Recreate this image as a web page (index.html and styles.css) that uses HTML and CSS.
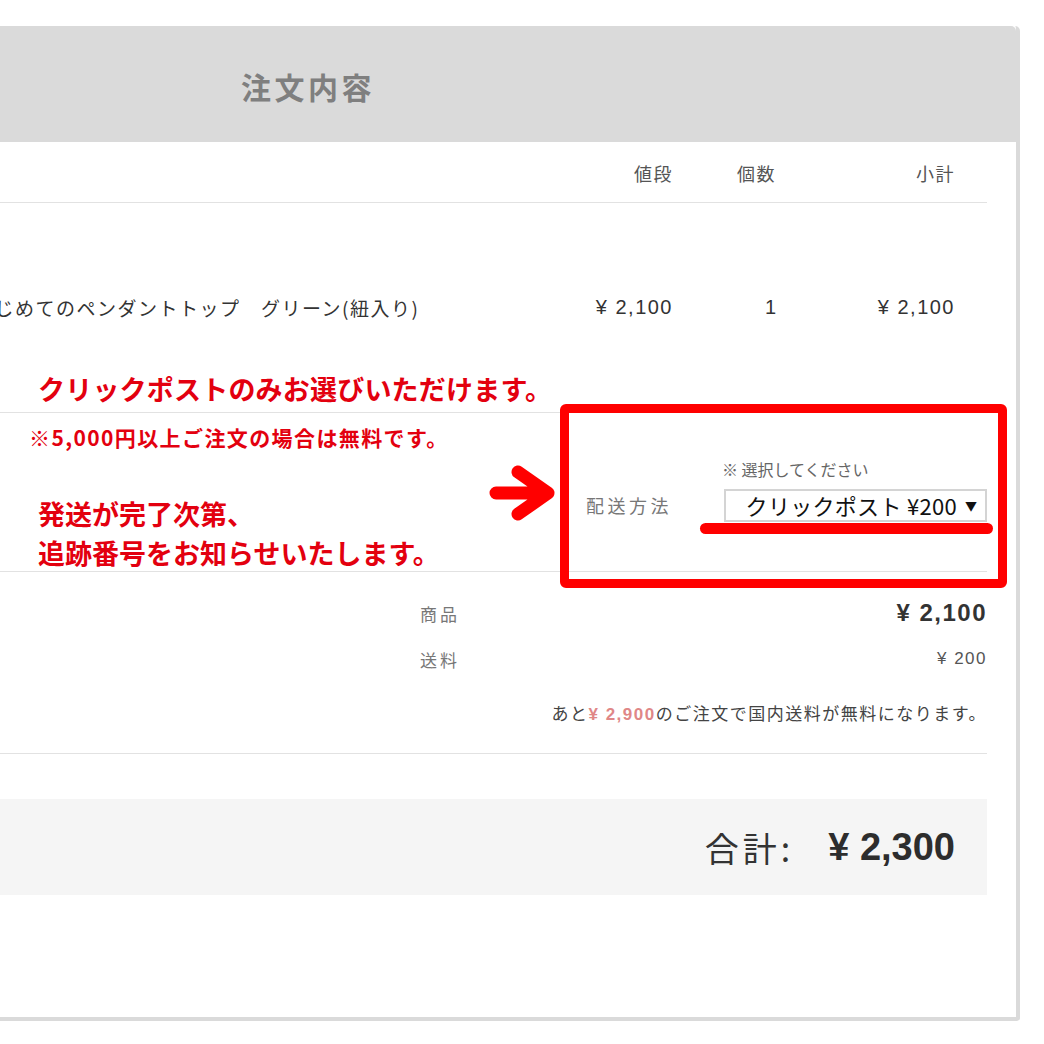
FILE: index.html
```html
<!DOCTYPE html>
<html lang="ja">
<head>
<meta charset="utf-8">
<title>注文内容</title>
<link rel="stylesheet" href="styles.css">
</head>
<body>
<div class="page">
  <section class="card">
    <header class="card-head"><h2 class="card-title">注文内容</h2></header>
    <div class="card-body">
      <div class="row row-head">
        <div class="c-name"></div>
        <div class="c-price">値段</div>
        <div class="c-qty">個数</div>
        <div class="c-sub">小計</div>
      </div>
      <div class="row row-item">
        <div class="c-name">はじめてのペンダントトップ　グリーン(紐入り)</div>
        <div class="c-price">¥ 2,100</div>
        <div class="c-qty">1</div>
        <div class="c-sub">¥ 2,100</div>
      </div>
      <div class="ship">
        <div class="ship-label">配送方法</div>
        <div class="ship-field">
          <div class="ship-note">※ 選択してください</div>
          <div class="select"><span class="select-text">クリックポスト ¥200</span><span class="caret">▼</span></div>
        </div>
      </div>
      <div class="summary">
        <div class="sum-row"><span class="sum-label">商品</span><span class="sum-val strong">¥ 2,100</span></div>
        <div class="sum-row"><span class="sum-label">送料</span><span class="sum-val">¥ 200</span></div>
        <p class="sum-note">あと<b class="pink">¥ 2,900</b>のご注文で国内送料が無料になります。</p>
      </div>
      <div class="total"><span class="total-label">合計:</span><span class="total-val">¥ 2,300</span></div>
    </div>
  </section>

  <div class="annot annot-main">クリックポストのみお選びいただけます。</div>
  <div class="annot annot-free">※5,000円以上ご注文の場合は無料です。</div>
  <div class="annot annot-track">発送が完了次第、<br>追跡番号をお知らせいたします。</div>
  <svg class="annot-arrow" width="76" height="64" viewBox="0 0 76 64">
    <path d="M12 31 L64 31 M34 10 L64 31 L34 52" fill="none" stroke="#f00" stroke-width="13" stroke-linecap="round" stroke-linejoin="round"/>
  </svg>
  <div class="annot-box"></div>
  <div class="annot-line"></div>
</div>
</body>
</html>
```

FILE: styles.css
```css
html, body {
  margin: 0;
  padding: 0;
  overflow: hidden;
  background: #fff;
}
body {
  font-family: "Liberation Sans", "Noto Sans CJK JP", sans-serif;
  color: #333;
}
.page {
  position: relative;
  width: 1044px;
  height: 1044px;
  overflow: hidden;
}
.card {
  box-sizing: border-box;
  margin-top: 26px;
  margin-left: -404px;
  width: 1424px;
  height: 995px;
  border-right: 4px solid #dadada;
  border-bottom: 4px solid #dadada;
  border-top-right-radius: 5px;
  border-bottom-right-radius: 4px;
  background: #fff;
}
.card-head {
  box-sizing: border-box;
  height: 116px;
  background: #dadada;
  border-top-right-radius: 5px;
  padding-top: 42px;
}
.card-title {
  margin: 0;
  padding-left: 4px;
  text-align: center;
  font-family: "Noto Sans CJK JP", sans-serif;
  font-size: 30px;
  line-height: 36px;
  font-weight: 700;
  letter-spacing: 3.5px;
  color: #7f7f7f;
}
.card-body {
  padding: 0 29px 0 40px;
}
.row {
  display: grid;
  grid-template-columns: 1fr 120px 192px 90px;
  padding-right: 32px;
  align-items: center;
  border-bottom: 1px solid #e2e2e2;
}
.row-head {
  height: 61px;
  box-sizing: border-box;
  padding-top: 2px;
  font-family: "Noto Sans CJK JP", sans-serif;
  font-size: 18px;
  color: #555;
  letter-spacing: 1.5px;
}
.row-item {
  height: 210px;
  box-sizing: border-box;
  font-size: 20px;
  letter-spacing: 1.5px;
  color: #333;
}
.c-price { text-align: right; }
.c-sub { text-align: right; }
.row-head .c-qty { padding-left: 64px; }
.row-item .c-qty { padding-left: 92px; }
.row-item .c-name {
  padding-left: 338px;
  font-family: "Noto Sans CJK JP", sans-serif;
  font-size: 19px;
  letter-spacing: 1.5px;
  white-space: nowrap;
}
.ship {
  display: flex;
  justify-content: flex-end;
  align-items: flex-end;
  gap: 52px;
  height: 159px;
  box-sizing: border-box;
  padding-bottom: 49px;
  border-bottom: 1px solid #e2e2e2;
  font-family: "Noto Sans CJK JP", sans-serif;
}
.ship-label {
  font-size: 18px;
  line-height: 33px;
  letter-spacing: 3.5px;
  color: #777;
}
.ship-field {
  width: 263px;
}
.ship-note {
  font-size: 16px;
  line-height: 20px;
  color: #666;
  margin-bottom: 10px;
  margin-left: -2px;
}
.select {
  box-sizing: border-box;
  height: 33px;
  border: 2px solid #d4d4d4;
  display: flex;
  align-items: center;
  justify-content: flex-end;
  padding-right: 8px;
  gap: 8px;
  background: #fff;
}
.select-text {
  font-family: "Noto Sans CJK JP", sans-serif;
  font-size: 22px;
  letter-spacing: 0.3px;
  color: #111;
  line-height: 29px;
}
.caret {
  font-size: 12px;
  color: #111;
}
.summary {
  box-sizing: border-box;
  height: 182px;
  padding: 18px 0 0 0;
  border-bottom: 1px solid #e2e2e2;
  display: flex;
  flex-direction: column;
  align-items: flex-end;
}
.sum-row {
  width: 567px;
  height: 46px;
  display: flex;
  justify-content: space-between;
  align-items: center;
}
.sum-label {
  font-family: "Noto Sans CJK JP", sans-serif;
  font-size: 17px;
  letter-spacing: 3px;
  color: #777;
}
.sum-val {
  font-size: 17px;
  letter-spacing: 1.5px;
  color: #555;
}
.sum-val.strong {
  font-size: 24px;
  font-weight: 700;
  letter-spacing: 1.5px;
  color: #333;
}
.sum-note {
  margin: 21px 0 0 0;
  font-family: "Noto Sans CJK JP", sans-serif;
  font-size: 17px;
  line-height: 20px;
  letter-spacing: 1.5px;
  color: #444;
}
.pink {
  font-family: "Liberation Sans", sans-serif;
  font-weight: 700;
  color: #e08787;
}
.total {
  margin-top: 45px;
  height: 96px;
  background: #f5f5f5;
  display: flex;
  justify-content: flex-end;
  align-items: center;
  padding-right: 32px;
  gap: 34px;
}
.total-label {
  font-family: "Noto Sans CJK JP", sans-serif;
  font-size: 34px;
  letter-spacing: 4px;
  color: #333;
}
.total-val {
  font-size: 38px;
  font-weight: 700;
  color: #2d2d2d;
}
.annot {
  position: absolute;
  font-family: "Noto Sans CJK JP", sans-serif;
  font-weight: 700;
  color: #e3000f;
  white-space: nowrap;
}
.annot-main {
  left: 38px;
  top: 371px;
  font-size: 27px;
  line-height: 36px;
  letter-spacing: 0.2px;
}
.annot-free {
  left: 29px;
  top: 424px;
  font-size: 21px;
  line-height: 26px;
  letter-spacing: 1.4px;
}
.annot-track {
  left: 38px;
  top: 494px;
  font-size: 27px;
  line-height: 39px;
}
.annot-arrow {
  position: absolute;
  left: 484px;
  top: 462px;
}
.annot-box {
  position: absolute;
  box-sizing: border-box;
  left: 560px;
  top: 404px;
  width: 447px;
  height: 184px;
  border: 9px solid #f00;
  border-radius: 6px;
}
.annot-line {
  position: absolute;
  left: 700px;
  top: 523px;
  width: 293px;
  height: 11px;
  border-radius: 6px;
  background: #f00;
}
```
